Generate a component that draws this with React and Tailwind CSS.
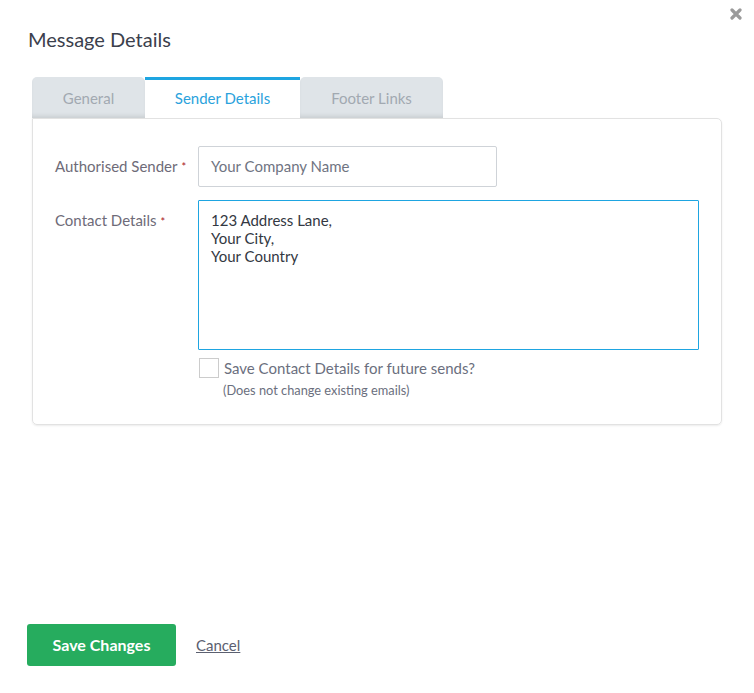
export default function App() {
  const font = { fontFamily: '"Source Sans Pro", Lato, "Noto Sans", sans-serif' };
  return (
    <div className="w-[754px] h-[693px] bg-white relative flex flex-col" style={font}>
      <button className="absolute right-[12px] top-[8px] text-[#9a9a9a] text-[16px] leading-none font-bold">
        <svg width="12" height="12" viewBox="0 0 12 12"><path d="M2 2 L10 10 M10 2 L2 10" stroke="#9a9a9a" strokeWidth="3.2" strokeLinecap="round" /></svg>
      </button>
      <div className="pl-[28px] pt-[26px] h-[77px]">
        <h1 className="text-[20px] leading-[26px] text-[#3b404c]">Message Details</h1>
      </div>
      <div className="pl-[32px] pr-[32px]">
        <div className="flex h-[41px]">
          <div className="w-[113px] h-[41px] rounded-t-[5px] bg-[#dfe4e8] shadow-[inset_0_-4px_4px_-2px_rgba(0,0,0,0.10)] flex items-center justify-center text-[15px] text-[#a2a9b1] pt-[1px]">General</div>
          <div className="w-[155px] h-[41px] bg-white border-t-[3px] border-[#1ea5e1] flex items-center justify-center text-[15px] text-[#2aa2dc] pb-[2px]">Sender Details</div>
          <div className="w-[143px] h-[41px] rounded-t-[5px] bg-[#dfe4e8] shadow-[inset_0_-4px_4px_-2px_rgba(0,0,0,0.10)] flex items-center justify-center text-[15px] text-[#a2a9b1] pt-[1px]">Footer Links</div>
        </div>
        <div className="h-[307px] border border-[#e2e2e2] rounded-b-[5px] rounded-tr-[5px] shadow-[0_1px_2px_rgba(0,0,0,0.08)] pl-[22px] pr-[22px] pt-[27px]">
          <div className="flex items-center h-[41px]">
            <div className="w-[143px] text-[15px] text-[#6e6b78] flex items-center">
              Authorised Sender<span className="text-[#a8161b] text-[11px] ml-[4px] mt-[2px]">*</span>
            </div>
            <div className="w-[299px] h-[41px] border border-[#cfd3d8] rounded-[2px] flex items-center pl-[12px] text-[15px] text-[#6f7482]">Your Company Name</div>
          </div>
          <div className="flex mt-[13px]">
            <div className="w-[143px] text-[15px] text-[#6e6b78] pt-[10px] flex items-start leading-[20px]">
              Contact Details<span className="text-[#a8161b] text-[11px] ml-[4px] mt-[2px]">*</span>
            </div>
            <div className="flex-1">
              <div className="h-[150px] border border-[#1ea5e1] rounded-[1px] pl-[12px] pt-[10px] text-[15px] leading-[18px] text-[#333842]">
                <div>123 Address Lane,</div>
                <div>Your City,</div>
                <div>Your Country</div>
              </div>
              <div className="flex items-center mt-[8px]">
                <div className="w-[20px] h-[20px] border border-[#cccccc] ml-[1px]"></div>
                <div className="ml-[5px] text-[15px] text-[#6b6f7e] leading-[20px]">Save Contact Details for future sends?</div>
              </div>
              <div className="ml-[25px] mt-[3px] text-[12.8px] text-[#6b6f7e] leading-[18px]">(Does not change existing emails)</div>
            </div>
          </div>
        </div>
      </div>
      <div className="flex items-center pl-[27px] mt-[199px]">
        <button className="w-[149px] h-[42px] rounded-[3px] bg-[#26ac5e] text-white text-[16px] font-bold">Save Changes</button>
        <span className="ml-[20px] text-[15px] text-[#5b6070] underline">Cancel</span>
      </div>
    </div>
  );
}
